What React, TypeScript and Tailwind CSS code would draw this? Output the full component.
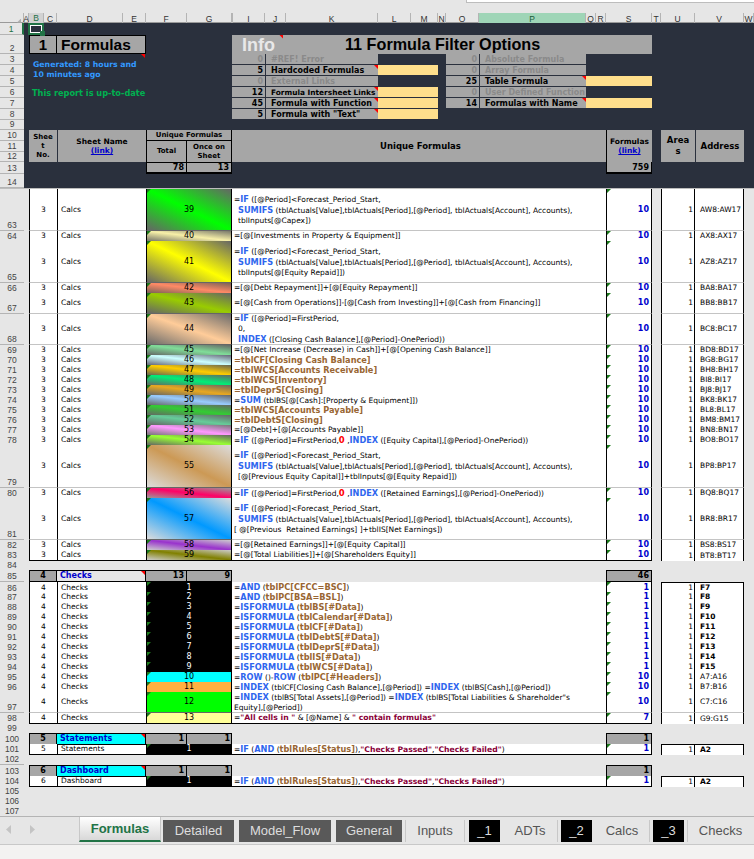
import React from 'react'

const COLS = 'grid-cols-[24px_5px_15px_13px_66px_23px_41px_45px_1px_32px_21px_92px_33px_27px_8px_33px_107px_10px_10px_46px_9px_34px_49px_10px]'
const BODY = 'grid-cols-[24px_5px_28px_89px_86px_374px_46px_9px_34px_49px_10px]'

const LETTERS = ['', 'A', 'B', 'C', 'D', 'E', 'F', 'G', '', 'I', 'J', 'K', 'L', 'M', 'N', 'O', 'P', 'Q', 'R', 'S', 'T', 'U', 'V', 'W']

const HEIGHTS: Record<number, string> = {
  10: 'h-[10px]',
  11: 'h-[11px]',
  12: 'h-[12px]',
  21: 'h-[21px]',
  31: 'h-[31px]',
  42: 'h-[42px]',
  43: 'h-[43px]',
}

// 行号单元：数字贴底
function RowNo({ n, className }: { n: number; className?: string }) {
  return (
    <div className={`flex items-end justify-center border-b border-[#b4b4b4] bg-[#e6e6e6] font-['Liberation_Sans',sans-serif] text-[8.5px] leading-[10px] font-normal text-[#444] ${className ?? ''}`}>
      {n}
    </div>
  )
}

function Mark({ color = 'green', side = 'left' }: { color?: 'green' | 'red'; side?: 'left' | 'right' }) {
  if (side === 'right') {
    return <span className={`absolute top-0 right-0 h-[4px] w-[4px] [clip-path:polygon(0_0,100%_0,100%_100%)] ${color === 'red' ? 'bg-[#ff0000]' : 'bg-[#1c7a1c]'}`} />
  }
  return <span className="absolute top-0 left-0 h-[4px] w-[4px] bg-[#1c7a1c] [clip-path:polygon(0_0,100%_0,0_100%)]" />
}

const Fn = ({ children }: { children: React.ReactNode }) => <b className="text-[8.2px] font-bold text-[#2f66ee]">{children}</b>
const Tb = ({ children }: { children: React.ReactNode }) => <b className="text-[8.2px] font-bold text-[#996633]">{children}</b>
const St = ({ children }: { children: React.ReactNode }) => <b className="text-[7.7px] font-bold text-[#8a0038]">{children}</b>
const Zero = () => <b className="text-[8.5px] font-bold text-[#ff0000]">0</b>
const L2 = ({ children }: { children: React.ReactNode }) => <div className="pl-[4px]">{children}</div>

type BodyRow = {
  row: number
  h: number
  no: number
  name: string
  swatch: string
  n: number
  light?: boolean
  count: number
  addr: string
  boldAddr?: boolean
  last?: boolean
  first?: boolean
  f: React.ReactNode
}

const ifSum = (last: React.ReactNode, indent = true) => (
  <>
    <div>=<Fn>IF</Fn> ([@Period]&lt;Forecast_Period_Start,</div>
    <L2><Fn>SUMIFS</Fn> (tblActuals[Value],tblActuals[Period],[@Period], tblActuals[Account], Accounts),</L2>
    {indent ? <L2>{last}</L2> : <div>{last}</div>}
  </>
)

const calcs: Omit<BodyRow, 'no' | 'name' | 'count'>[] = [
  { row: 63, h: 42, n: 39, addr: 'AW8:AW17', swatch: 'bg-[linear-gradient(to_top_right,#666,#00ff00,#666)]', f: ifSum('tblInputs[@Capex])') },
  { row: 64, h: 10, n: 40, addr: 'AX8:AX17', swatch: 'bg-[linear-gradient(to_top_right,#77776a,#f7f0a8,#77776a)]', f: '=[@[Investments in Property & Equipment]]' },
  { row: 65, h: 42, n: 41, addr: 'AZ8:AZ17', swatch: 'bg-[linear-gradient(to_top_right,#666,#ffff00,#666)]', f: ifSum('tblInputs[@[Equity Repaid]])') },
  { row: 66, h: 10, n: 42, addr: 'BA8:BA17', swatch: 'bg-[linear-gradient(to_top_right,#7a6258,#ff8a66,#7a6258)]', f: '=[@[Debt Repayment]]+[@[Equity Repayment]]' },
  { row: 67, h: 21, n: 43, addr: 'BB8:BB17', swatch: 'bg-[linear-gradient(to_top_right,#666,#99cc00,#666)]', f: '=[@[Cash from Operations]]-[@[Cash from Investing]]+[@[Cash from Financing]]' },
  {
    row: 68, h: 31, n: 44, addr: 'BC8:BC17', swatch: 'bg-[linear-gradient(to_top_right,#6b6b6b,#ffcc99,#6b6b6b)]',
    f: (
      <>
        <div>=<Fn>IF</Fn> ([@Period]=FirstPeriod,</div>
        <L2>0,</L2>
        <L2><Fn>INDEX</Fn> ([Closing Cash Balance],[@Period]-OnePeriod))</L2>
      </>
    ),
  },
  { row: 69, h: 10, n: 45, addr: 'BD8:BD17', swatch: 'bg-[linear-gradient(to_top_right,#666,#80dd99,#666)]', f: '=[@[Net Increase (Decrease) in Cash]]+[@[Opening Cash Balance]]' },
  { row: 70, h: 10, n: 46, addr: 'BG8:BG17', swatch: 'bg-[linear-gradient(to_top_right,#667,#ccffff,#667)]', f: <Tb>=tblCF[Closing Cash Balance]</Tb> },
  { row: 71, h: 10, n: 47, addr: 'BH8:BH17', swatch: 'bg-[linear-gradient(to_top_right,#665,#ffcc00,#665)]', f: <Tb>=tblWCS[Accounts Receivable]</Tb> },
  { row: 72, h: 10, n: 48, addr: 'BI8:BI17', swatch: 'bg-[linear-gradient(to_top_right,#666,#00ee77,#666)]', f: <Tb>=tblWCS[Inventory]</Tb> },
  { row: 73, h: 10, n: 49, addr: 'BJ8:BJ17', swatch: 'bg-[linear-gradient(to_top_right,#666,#e8a820,#666)]', f: <Tb>=tblDeprS[Closing]</Tb> },
  { row: 74, h: 10, n: 50, addr: 'BK8:BK17', swatch: 'bg-[linear-gradient(to_top_right,#666,#99ccff,#666)]', f: <>=<Fn>SUM</Fn> (tblBS[@[Cash]:[Property &amp; Equipment]])</> },
  { row: 75, h: 10, n: 51, addr: 'BL8:BL17', swatch: 'bg-[linear-gradient(to_top_right,#666,#33cc33,#666)]', f: <Tb>=tblWCS[Accounts Payable]</Tb> },
  { row: 76, h: 10, n: 52, addr: 'BM8:BM17', swatch: 'bg-[linear-gradient(to_top_right,#666,#66cc99,#666)]', f: <Tb>=tblDebtS[Closing]</Tb> },
  { row: 77, h: 10, n: 53, addr: 'BN8:BN17', swatch: 'bg-[linear-gradient(to_top_right,#777,#ff99ff,#777)]', f: '=[@Debt]+[@[Accounts Payable]]' },
  { row: 78, h: 10, n: 54, addr: 'BO8:BO17', swatch: 'bg-[linear-gradient(to_top_right,#666,#99ff33,#666)]', f: <>=<Fn>IF</Fn> ([@Period]=FirstPeriod,<Zero /> ,<Fn>INDEX</Fn> ([Equity Capital],[@Period]-OnePeriod))</> },
  { row: 79, h: 43, n: 55, addr: 'BP8:BP17', swatch: 'bg-[linear-gradient(to_top_right,#dcdcdc,#cc9955,#dcdcdc)]', f: ifSum('[@[Previous Equity Capital]]+tblInputs[@[Equity Repaid]])') },
  { row: 80, h: 10, n: 56, addr: 'BQ8:BQ17', swatch: 'bg-[linear-gradient(to_top_right,#999,#ff0066,#999)]', f: <>=<Fn>IF</Fn> ([@Period]=FirstPeriod,<Zero /> ,<Fn>INDEX</Fn> ([Retained Earnings],[@Period]-OnePeriod))</> },
  { row: 81, h: 42, n: 57, addr: 'BR8:BR17', swatch: 'bg-[linear-gradient(to_top_right,#dcdcdc,#0099ff,#dcdcdc)]', f: ifSum('[ @[Previous  Retained Earnings] ]+tblIS[Net Earnings])', false) },
  { row: 82, h: 10, n: 58, addr: 'BS8:BS17', swatch: 'bg-[linear-gradient(to_top_right,#ccc,#9933cc,#ccc)]', f: '=[@[Retained Earnings]]+[@[Equity Capital]]' },
  { row: 83, h: 10, n: 59, addr: 'BT8:BT17', swatch: 'bg-[linear-gradient(to_top_right,#ccc,#808000,#ccc)]', f: '=[@[Total Liabilities]]+[@[Shareholders Equity]]', last: true },
]

const isf = (t: string) => <>=<Fn>ISFORMULA</Fn> (<Tb>{t}</Tb>)</>
const BLACK = 'bg-black'

const checks: Omit<BodyRow, 'no' | 'name'>[] = [
  { row: 86, h: 10, n: 1, count: 1, light: true, addr: 'F7', boldAddr: true, first: true, swatch: BLACK, f: <>=<Fn>AND</Fn> (<Tb>tblPC[CFCC=BSC]</Tb>)</> },
  { row: 87, h: 10, n: 2, count: 1, light: true, addr: 'F8', boldAddr: true, swatch: BLACK, f: <>=<Fn>AND</Fn> (<Tb>tblPC[BSA=BSL]</Tb>)</> },
  { row: 88, h: 10, n: 3, count: 1, light: true, addr: 'F9', boldAddr: true, swatch: BLACK, f: isf('tblBS[#Data]') },
  { row: 89, h: 10, n: 4, count: 1, light: true, addr: 'F10', boldAddr: true, swatch: BLACK, f: isf('tblCalendar[#Data]') },
  { row: 90, h: 10, n: 5, count: 1, light: true, addr: 'F11', boldAddr: true, swatch: BLACK, f: isf('tblCF[#Data]') },
  { row: 91, h: 10, n: 6, count: 1, light: true, addr: 'F12', boldAddr: true, swatch: BLACK, f: isf('tblDebtS[#Data]') },
  { row: 92, h: 10, n: 7, count: 1, light: true, addr: 'F13', boldAddr: true, swatch: BLACK, f: isf('tblDeprS[#Data]') },
  { row: 93, h: 10, n: 8, count: 1, light: true, addr: 'F14', boldAddr: true, swatch: BLACK, f: isf('tblIS[#Data]') },
  { row: 94, h: 10, n: 9, count: 1, light: true, addr: 'F15', boldAddr: true, swatch: BLACK, f: isf('tblWCS[#Data]') },
  { row: 95, h: 10, n: 10, count: 10, addr: 'A7:A16', swatch: 'bg-[#00ffff]', f: <>=<Fn>ROW</Fn> ()-<Fn>ROW</Fn> (<Tb>tblPC[#Headers]</Tb>)</> },
  { row: 96, h: 10, n: 11, count: 10, addr: 'B7:B16', swatch: 'bg-[#ffb042]', f: <>=<Fn>INDEX</Fn> (tblCF[Closing Cash Balance],[@Period]) =<Fn>INDEX</Fn> (tblBS[Cash],[@Period])</> },
  {
    row: 97, h: 21, n: 12, count: 10, addr: 'C7:C16', swatch: 'bg-[#00ff00]',
    f: (
      <>
        <div>=<Fn>INDEX</Fn> (tblBS[Total Assets],[@Period]) =<Fn>INDEX</Fn> (tblBS[Total Liabilities &amp; Shareholder"s</div>
        <div>Equity],[@Period])</div>
      </>
    ),
  },
  { row: 98, h: 10, n: 13, count: 7, addr: 'G9:G15', last: true, swatch: 'bg-[#ffff99]', f: <>=<St>"All cells in "</St> &amp; [@Name] &amp; <St>" contain formulas"</St></> },
]

const statusF = <>=<Fn>IF</Fn> (<Fn>AND</Fn> (<Tb>tblRules[Status]</Tb>),<St>"Checks Passed"</St>,<St>"Checks Failed"</St>)</>

function Row({ r }: { r: BodyRow }) {
  const line = r.last ? 'border-b border-b-black' : 'border-b border-b-[#c4c4c4]'
  const top = r.first ? 'border-t border-t-black' : ''
  return (
    <div className={`grid ${BODY} ${HEIGHTS[r.h]} text-[7.5px] leading-[10px]`}>
      <RowNo n={r.row} />
      <div />
      <div className={`flex items-center justify-center border-l border-black bg-white ${line}`}>{r.no}</div>
      <div className={`flex items-center border-l border-black bg-white pl-[3px] ${line}`}>{r.name}</div>
      <div className={`relative flex items-center justify-center border-x border-black text-[8px] ${r.swatch} ${r.light ? 'text-white' : 'text-black'} ${r.last ? 'border-b border-b-black' : 'border-b border-b-[#666]'}`}>
        <Mark />
        {r.n}
      </div>
      <div className={`flex flex-col justify-center overflow-hidden whitespace-pre bg-white pl-[2px] ${line}`}>
        <div>{r.f}</div>
      </div>
      <div className={`relative flex items-center justify-end border-x border-black bg-white pr-[2px] text-[8px] font-bold text-[#0000cc] ${line}`}>
        <Mark />
        {r.count}
      </div>
      <div />
      <div className={`flex items-center justify-end border-x border-black bg-white pr-[1px] ${r.last ? '' : 'border-b border-b-[#c4c4c4]'} ${top}`}>1</div>
      <div className={`flex items-center border-r border-black bg-white pl-[5px] ${r.boldAddr ? 'font-bold' : ''} ${r.last ? '' : 'border-b border-b-[#c4c4c4]'} ${top}`}>{r.addr}</div>
      <div />
    </div>
  )
}

function SectionRow({ row, no, name, cyan, a, b, total }: { row: number; no: number; name: string; cyan?: boolean; a: number; b: number; total: number }) {
  return (
    <div className={`grid ${BODY} ${row === 85 ? 'h-[12px]' : 'h-[11px]'} text-[8px] font-bold leading-[10px]`}>
      <RowNo n={row} />
      <div />
      <div className="flex items-center justify-center border border-black bg-[#a6a6a6]">{no}</div>
      <div className={`relative flex items-center border-y border-r border-black pl-[3px] text-[#0000cc] ${cyan ? 'bg-[#00ffff]' : 'bg-[#e6e6e6]'}`}>
        <Mark side="right" color="red" />
        {name}
      </div>
      <div className="grid grid-cols-[41px_45px] border-y border-r border-black bg-[#a6a6a6]">
        <div className="flex items-center justify-end border-r border-black pr-[2px]">{a}</div>
        <div className="flex items-center justify-end pr-[2px]">{b}</div>
      </div>
      <div />
      <div className="flex items-center justify-end border border-black bg-[#a6a6a6] pr-[2px]">{total}</div>
    </div>
  )
}

function GapRow({ row, h = 10 }: { row: number; h?: number }) {
  return (
    <div className={`grid ${BODY} ${HEIGHTS[h]}`}>
      <RowNo n={row} />
    </div>
  )
}

const filters = [
  { r: 'row-[3]', n: 0, label: '#REF! Error', on: false, size: 'text-[8px]' },
  { r: 'row-[4]', n: 5, label: 'Hardcoded Formulas', on: true, size: 'text-[8px]' },
  { r: 'row-[5]', n: 0, label: 'External Links', on: false, size: 'text-[8px]' },
  { r: 'row-[6]', n: 12, label: 'Formula Intersheet Links', on: true, size: 'text-[7.4px]' },
  { r: 'row-[7]', n: 45, label: 'Formula with Function', on: true, size: 'text-[8px]' },
  { r: 'row-[8]', n: 5, label: 'Formula with "Text"', on: true, size: 'text-[8px]' },
]

const filtersRight = [
  { r: 'row-[3]', n: 0, label: 'Absolute Formula', on: false },
  { r: 'row-[4]', n: 0, label: 'Array Formula', on: false },
  { r: 'row-[5]', n: 25, label: 'Table Formula', on: true },
  { r: 'row-[6]', n: 0, label: 'User Defined Function', on: false },
  { r: 'row-[7]', n: 14, label: 'Formulas with Name', on: true },
]

const HEAD_ROWS = ['row-[1]', 'row-[2]', 'row-[3]', 'row-[4]', 'row-[5]', 'row-[6]', 'row-[7]', 'row-[8]', 'row-[9]', 'row-[10]', 'row-[11]', 'row-[12]', 'row-[13]', 'row-[14]']

function Header() {
  return (
    <div className={`grid ${COLS} grid-rows-[12px_19px_11px_11px_11px_11px_11px_11px_10px_11px_11px_10px_12px_14px] bg-[#2a303d] text-[7.5px] font-bold leading-[9px] text-black`}>
      {HEAD_ROWS.map((r, i) => (
        <RowNo key={r} n={i + 1} className={`col-[1] ${r} ${i === 0 ? 'border-r-2 border-r-[#217346] bg-[#d2d2d2] text-[#217346]' : ''}`} />
      ))}

      <div className="relative col-[3] row-[1] -ml-px border-2 border-[#217346]">
        <div className="h-full w-full border border-white" />
        <span className="absolute -right-[3px] -bottom-[3px] h-[5px] w-[5px] bg-[#217346]" />
      </div>

      <div className="col-[3/5] row-[2] flex items-center justify-center border border-black bg-[#a6a6a6] font-['Liberation_Sans',sans-serif] text-[15px] leading-none">1</div>
      <div className="col-[5/7] row-[2] flex items-center border-y border-r border-black bg-[#a6a6a6] pl-[4px] font-['Liberation_Sans',sans-serif] text-[15.5px] leading-none">Formulas</div>

      <div className="relative col-[3/8] row-[3/6] pt-[6px] pl-[4px] text-[7.75px] leading-[10px] text-[#3399ff]">
        Generated: 8 hours and
        <br />
        10 minutes ago
        <span className="absolute top-0 left-[112px] h-[4px] w-[4px] bg-[#ff0000] [clip-path:polygon(0_0,100%_0,100%_100%)]" />
      </div>
      <div className="col-[3/8] row-[6/8] whitespace-nowrap pt-[1px] pl-[3px] text-[8.2px] leading-[10px] text-[#00b050]">This report is up-to-date</div>

      <div className="col-[9/21] row-[2] flex items-center gap-[70px] bg-[#a6a6a6] pl-[10px] font-['Liberation_Sans',sans-serif] leading-none">
        <span className="relative text-[18px] text-[#e8e8e8]">Info<span className="absolute -top-[1px] -right-[8px] h-[4px] w-[4px] bg-[#ff0000] [clip-path:polygon(0_0,100%_0,100%_100%)]" /></span>
        <span className="text-[16.2px]">11 Formula Filter Options</span>
      </div>

      {filters.map((f) => (
        <React.Fragment key={f.label}>
          <div className={`col-[9/11] ${f.r} mb-px flex items-center justify-end bg-[#a6a6a6] pr-[2px] text-[8px] ${f.on ? '' : 'text-[#8a8a8a]'}`}>{f.n}</div>
          <div className={`col-[11/13] ${f.r} relative mb-px ml-px flex items-center overflow-hidden whitespace-nowrap bg-[#a6a6a6] pl-[5px] ${f.size} ${f.on ? '' : 'text-[#8a8a8a]'}`}>
            {f.on ? <Mark side="right" color="red" /> : null}
            {f.label}
          </div>
          {f.on ? <div className={`col-[13/15] ${f.r} mb-px bg-[#ffdf8c]`} /> : null}
        </React.Fragment>
      ))}
      {filtersRight.map((f) => (
        <React.Fragment key={f.label}>
          <div className={`col-[16] ${f.r} mb-px flex items-center justify-end bg-[#a6a6a6] pr-[2px] text-[8px] ${f.on ? '' : 'text-[#8a8a8a]'}`}>{f.n}</div>
          <div className={`col-[17] ${f.r} relative mb-px ml-px flex items-center overflow-hidden whitespace-nowrap bg-[#a6a6a6] pl-[5px] text-[8px] ${f.on ? '' : 'text-[#8a8a8a]'}`}>
            {f.on ? <Mark side="right" color="red" /> : null}
            {f.label}
          </div>
          {f.on ? <div className={`col-[18/21] ${f.r} mb-px bg-[#ffdf8c]`} /> : null}
        </React.Fragment>
      ))}

      <div className="col-[3/5] row-[10/13] flex items-center justify-center bg-[#a6a6a6] text-center text-[7px]">Shee<br />t<br />No.</div>
      <div className="col-[5/7] row-[10/13] ml-px flex flex-col items-center justify-center bg-[#a6a6a6]">
        <span>Sheet Name</span>
        <span className="text-[#0000cc] underline">(link)</span>
      </div>
      <div className="col-[7/9] row-[10] flex items-center justify-center whitespace-nowrap border-x border-b border-black bg-[#a6a6a6] text-[7px]">Unique Formulas</div>
      <div className="col-[7] row-[11/13] flex items-center justify-center border-x border-black bg-[#a6a6a6] text-[7px]">Total</div>
      <div className="col-[8] row-[11/13] flex items-center justify-center border-r border-black bg-[#a6a6a6] text-center text-[7px]">Once on<br />Sheet</div>
      <div className="col-[9/20] row-[10/13] flex items-center justify-center bg-[#a6a6a6] pl-[3px] text-[8.5px]">Unique Formulas</div>
      <div className="col-[20] row-[10/13] flex flex-col items-center justify-center border-l border-black bg-[#a6a6a6]">
        <span>Formulas</span>
        <span className="text-[#0000cc] underline">(link)</span>
      </div>
      <div className="col-[22] row-[10/13] flex items-center justify-center bg-[#a6a6a6] text-center text-[8.5px] leading-[11px]">Area<br />s</div>
      <div className="col-[23] row-[10/13] ml-px flex items-center justify-center bg-[#a6a6a6] text-[8.5px]">Address</div>

      <div className="col-[7] row-[13] flex items-center justify-end border border-b-2 border-black bg-[#a6a6a6] pr-[2px] text-[8px]">78</div>
      <div className="col-[8] row-[13] flex items-center justify-end border-y border-r border-b-2 border-black bg-[#a6a6a6] pr-[2px] text-[8px]">13</div>
      <div className="col-[20] row-[13] flex items-center justify-end border-x border-b-2 border-black bg-[#a6a6a6] pr-[2px] text-[8px]">759</div>
    </div>
  )
}

function Tab({ w, label, kind }: { w: string; label: string; kind: 'dark' | 'plain' | 'black' }) {
  const tone = kind === 'dark' ? 'bg-[#595959] text-[#dddddd]' : kind === 'black' ? 'bg-black text-[#dddddd]' : 'text-[#555]'
  return <div className={`flex h-[22px] items-center justify-center ${w} ${tone}`}>{label}</div>
}

export default function App() {
  return (
    <div className="flex h-[859px] w-[754px] flex-col overflow-hidden bg-[#e6e6e6] font-['DejaVu_Sans',sans-serif] text-black">
      <div className="flex h-[13px] justify-end">
        <div className="h-[3px] w-[288px] border-b border-l border-[#bdbdbd] bg-white" />
      </div>

      <div className={`grid ${COLS} h-[10px] border-b border-[#9a9a9a] font-['Liberation_Sans',sans-serif] text-[8.5px] leading-[10px] text-[#333]`}>
        {LETTERS.map((l, i) => (
          <div
            key={i}
            className={`flex items-center justify-center border-r border-[#b4b4b4] ${l === 'P' ? 'bg-[#9fd5b7] text-[#1a5c38]' : ''} ${l === 'B' ? 'border-b-2 border-b-[#217346] bg-[#d2d2d2] text-[#217346]' : ''}`}
          >
            {i === 0 ? <span className="ml-auto mr-[2px] mt-[3px] h-[4px] w-[4px] bg-[#b0b0b0] [clip-path:polygon(100%_0,100%_100%,0_100%)]" /> : l}
          </div>
        ))}
      </div>

      <Header />
      <div className="h-px bg-[#bdbdbd]" />

      {calcs.map((r) => (
        <Row key={r.row} r={{ ...r, no: 3, name: 'Calcs', count: 10 }} />
      ))}
      <GapRow row={84} />
      <SectionRow row={85} no={4} name="Checks" a={13} b={9} total={46} />
      {checks.map((r) => (
        <Row key={r.row} r={{ ...r, no: 4, name: 'Checks' }} />
      ))}
      <GapRow row={99} />
      <SectionRow row={100} no={5} name="Statements" cyan a={1} b={1} total={1} />
      <Row r={{ row: 101, h: 10, no: 5, name: 'Statements', n: 1, light: true, count: 1, addr: 'A2', boldAddr: true, first: true, last: true, swatch: BLACK, f: statusF }} />
      <GapRow row={102} h={11} />
      <SectionRow row={103} no={6} name="Dashboard" cyan a={1} b={1} total={1} />
      <Row r={{ row: 104, h: 10, no: 6, name: 'Dashboard', n: 1, light: true, count: 1, addr: 'A2', boldAddr: true, first: true, last: true, swatch: BLACK, f: statusF }} />
      <GapRow row={105} />
      <GapRow row={106} />
      <GapRow row={107} />

      <div className="flex h-[28px] items-start border-t border-[#b4b4b4] font-['Liberation_Sans',sans-serif] text-[13px]">
        <div className="flex h-[25px] w-[79px] items-center gap-[19px] pl-[6px] text-[#c4c4c4]">
          <svg width="5" height="9" viewBox="0 0 5 9"><path d="M5 0 0 4.5 5 9z" fill="currentColor" /></svg>
          <svg width="5" height="9" viewBox="0 0 5 9"><path d="M0 0 5 4.5 0 9z" fill="currentColor" /></svg>
        </div>
        <div className="flex h-[25px] w-[82px] items-center justify-center border-x border-b-2 border-x-[#c8c8c8] border-b-[#217346] bg-[linear-gradient(to_bottom,#ffffff,#d8d8d8)] font-bold text-[#217346]">Formulas</div>
        <div className="mt-[3px] flex gap-[3px]">
          <Tab w="ml-[2px] w-[71px]" label="Detailed" kind="dark" />
          <Tab w="ml-[2px] w-[92px]" label="Model_Flow" kind="dark" />
          <Tab w="ml-[2px] w-[66px]" label="General" kind="dark" />
          <Tab w="w-[60px] border-x border-[#c8c8c8]" label="Inputs" kind="plain" />
          <Tab w="ml-[1px] w-[31px]" label="_1" kind="black" />
          <Tab w="w-[55px] border-r border-[#c8c8c8]" label="ADTs" kind="plain" />
          <Tab w="w-[31px]" label="_2" kind="black" />
          <Tab w="w-[55px] border-r border-[#c8c8c8]" label="Calcs" kind="plain" />
          <Tab w="w-[31px]" label="_3" kind="black" />
          <Tab w="w-[66px] border-l border-[#c8c8c8]" label="Checks" kind="plain" />
        </div>
      </div>
      <div className="flex-1 border-t border-[#c8c8c8] bg-[#f3f2f1]" />
    </div>
  )
}
